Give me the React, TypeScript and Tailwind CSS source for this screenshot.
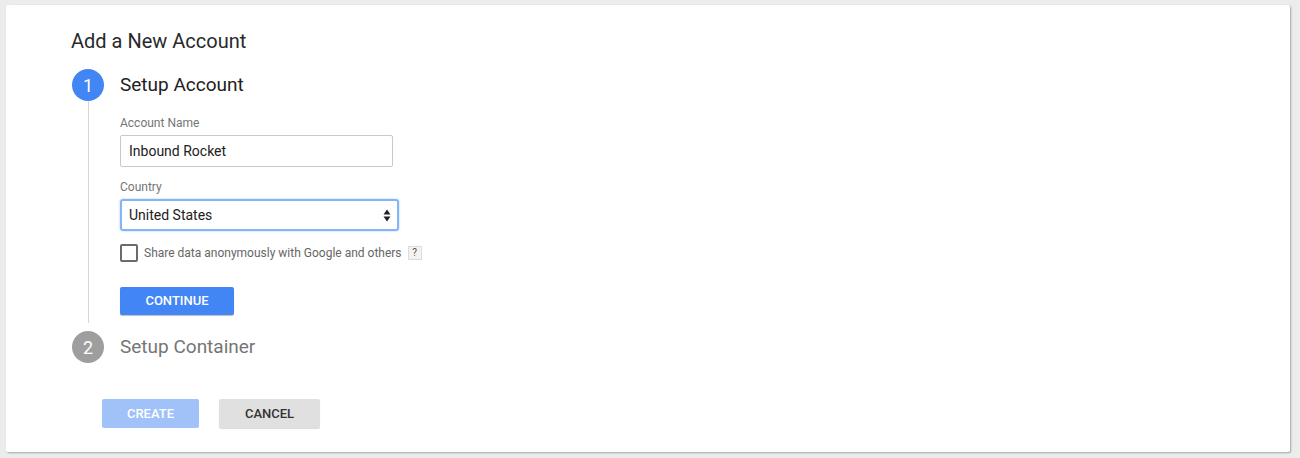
import React from "react";

const font = { fontFamily: "Roboto, 'Liberation Sans', sans-serif" };

function StepCircle({ n, active }: { n: number; active: boolean }) {
  return (
    <div
      className={`w-[32px] h-[32px] rounded-full flex items-center justify-center text-white text-[18px] shrink-0 ${
        active ? "bg-[#4285f4]" : "bg-[#9e9e9e]"
      }`}
    >
      {n}
    </div>
  );
}

export default function App() {
  return (
    <div className="min-h-[458px] bg-[#ececec] pt-[5px] pl-[6px]" style={font}>
      <div className="w-[1284px] h-[447px] bg-white shadow-[1px_1px_2px_rgba(0,0,0,0.3)] rounded-[2px] pt-[23px] pl-[65px]">
        <h1 className="text-[20px] leading-[26px] text-[#2a2a2a]">Add a New Account</h1>

        <div className="ml-px mt-[15px]">
          {/* step 1 */}
          <div className="flex">
            <div className="flex flex-col items-center w-[32px]">
              <StepCircle n={1} active />
              <div className="flex-1 w-px bg-[#d6d6d6]" />
            </div>
            <div className="ml-[16px] pb-[8px]">
              <div className="h-[32px] flex items-center text-[19px] text-[#212121]">Setup Account</div>
              <div className="mt-[14px] text-[12px] leading-[16px] text-[#757575]">Account Name</div>
              <input
                readOnly
                value="Inbound Rocket"
                className="mt-[4px] block w-[273px] h-[32px] border border-[#c9c9c9] rounded-[2px] px-[8px] text-[14px] text-[#212121] outline-none"
              />
              <div className="mt-[12px] text-[12px] leading-[16px] text-[#757575]">Country</div>
              <div className="relative mt-[4px] w-[279px] h-[32px] border-2 border-[#86b5f6] rounded-[3px] shadow-[0_0_2px_rgba(66,133,244,0.5)] flex items-center pl-[7px] text-[14px] text-[#212121]">
                United States
                <svg className="absolute right-[6px] top-[8px]" width="8" height="13" viewBox="0 0 8 13">
                  <path d="M4 0.5 L7.5 5.5 H0.5 Z" fill="#222" />
                  <path d="M4 12.5 L7.5 7.5 H0.5 Z" fill="#222" />
                </svg>
              </div>
              <div className="mt-[13px] flex items-center">
                <div className="w-[18px] h-[18px] border-2 border-[#6b6b6b] rounded-[2px]" />
                <span className="ml-[6px] text-[12px] text-[#666]">Share data anonymously with Google and others</span>
                <span className="ml-[6px] w-[14px] h-[14px] bg-[#f3f3f3] border border-[#dcdcdc] text-[10px] leading-[12px] text-[#555] flex items-center justify-center">
                  ?
                </span>
              </div>
              <button className="mt-[25px] w-[114px] h-[28px] bg-[#4285f4] text-white text-[13px] font-medium rounded-[2px] shadow-[0_1px_1px_rgba(0,0,0,0.25)]">
                CONTINUE
              </button>
            </div>
          </div>

          {/* step 2 */}
          <div className="flex items-center mt-[8px]">
            <StepCircle n={2} active={false} />
            <div className="ml-[16px] text-[19px] text-[#757575]">Setup Container</div>
          </div>
        </div>

        <div className="flex gap-[20px] ml-[31px] mt-[36px]">
          <button className="w-[97px] h-[29px] bg-[#a0c2f9] text-white text-[13px] font-medium rounded-[2px]">CREATE</button>
          <button className="w-[101px] h-[29px] bg-[#e0e0e0] text-[#333] text-[13px] font-medium rounded-[2px] shadow-[0_1px_1px_rgba(0,0,0,0.15)]">
            CANCEL
          </button>
        </div>
      </div>
    </div>
  );
}
